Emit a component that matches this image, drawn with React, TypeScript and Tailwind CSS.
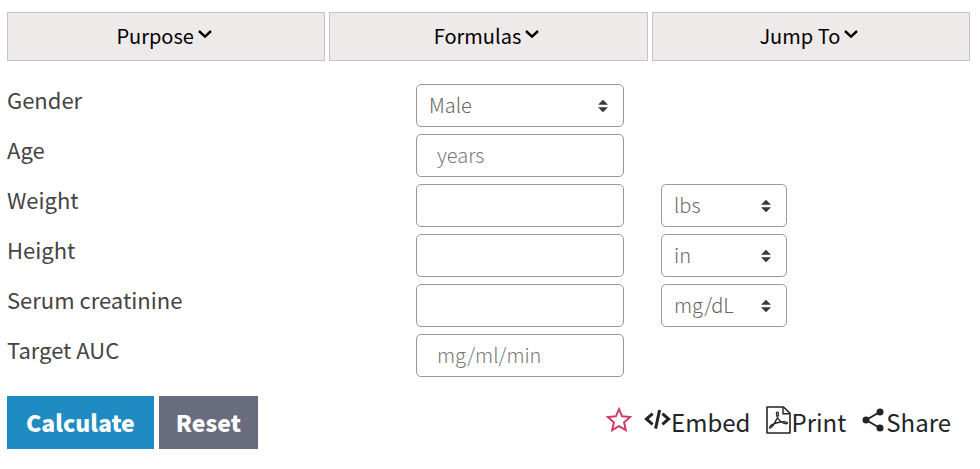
import { useState } from 'react'

type Field = {
  id: string
  label: string
  placeholder?: string
  options?: string[]
  units?: string[]
}

const TABS = ['Purpose', 'Formulas', 'Jump To']

const FIELDS: Field[] = [
  { id: 'gender', label: 'Gender', options: ['Male', 'Female'] },
  { id: 'age', label: 'Age', placeholder: 'years' },
  { id: 'weight', label: 'Weight', units: ['lbs', 'kg'] },
  { id: 'height', label: 'Height', units: ['in', 'cm'] },
  { id: 'creatinine', label: 'Serum creatinine', units: ['mg/dL', 'µmol/L'] },
  { id: 'auc', label: 'Target AUC', placeholder: 'mg/ml/min' },
]

function ChevronIcon() {
  return (
    <svg viewBox="0 0 14 8" className="mb-1 h-2 w-3.5" fill="none" stroke="currentColor" strokeWidth="2.4" aria-hidden="true">
      <path d="M1 1l6 5.6L13 1" />
    </svg>
  )
}

function StarIcon() {
  return (
    <svg viewBox="0 0 26 25" className="mb-1 h-[25px] w-[26px]" fill="none" stroke="#cf3a68" strokeWidth="2" aria-hidden="true">
      <path d="M13 2.2l3.1 7.1 8 .8-6 5.2 1.7 7.8L13 19.2l-6.8 3.9 1.7-7.8-6-5.2 8-.8z" />
    </svg>
  )
}

function CodeIcon() {
  return (
    <svg viewBox="0 0 27 21" className="mb-1 h-[21px] w-[27px]" fill="none" stroke="currentColor" strokeWidth="3" aria-hidden="true">
      <path d="M8.6 4.6L2.4 10l6.2 5.4M18.4 4.6l6.2 5.4-6.2 5.4M15.6 1l-4 18.6" />
    </svg>
  )
}

function PdfIcon() {
  return (
    <svg viewBox="0 0 25 28" className="mb-1 h-7 w-[25px]" fill="none" stroke="currentColor" aria-hidden="true">
      <path strokeWidth="1.6" strokeLinejoin="round" d="M1 1h16.5l6.5 6.3V27H1z" />
      <path strokeWidth="1.4" d="M17 1v6.8h7" />
      <path
        strokeWidth="1.3"
        d="M11.4 6.2c-1.5 0-1 2.3-.3 4.3.8 2.4 2.2 4.3 4.6 5.7 2.2 1.3 5.5 2.2 5.8.9.3-1.5-3.6-1.5-6.8-1.1-3.2.5-5.9 1.2-8.1 2.4-2.3 1.3-3.6 2.9-2.9 3.5.9.7 2.9-1.2 4.7-4.5 1.6-2.9 3.2-5.9 3.9-8.4.4-1.6 0-2.8-.9-2.8z"
      />
    </svg>
  )
}

function ShareIcon() {
  return (
    <svg viewBox="0 0 22 24" className="mb-1 h-6 w-[22px]" fill="currentColor" aria-hidden="true">
      <path d="M18 4L4 12l14 8" fill="none" stroke="currentColor" strokeWidth="2" />
      <circle cx="18" cy="4" r="3.5" />
      <circle cx="4" cy="12" r="3.5" />
      <circle cx="18" cy="20" r="3.5" />
    </svg>
  )
}

function Select({ id, label, options }: { id?: string; label?: string; options: string[] }) {
  return (
    <div className="relative">
      <select
        id={id}
        aria-label={label}
        className="h-[43px] w-full appearance-none rounded-[5px] border border-[#999] bg-white pb-0.5 pl-3 pr-8 text-xl font-light text-[#666]"
      >
        {options.map((o) => (
          <option key={o}>{o}</option>
        ))}
      </select>
      <svg
        viewBox="0 0 4 5"
        className="pointer-events-none absolute right-4 top-1/2 h-[13px] w-2.5 -translate-y-1/2"
        fill="#343a40"
        aria-hidden="true"
      >
        <path d="M2 0L0 2h4zm0 5L0 3h4z" />
      </svg>
    </div>
  )
}

export default function App() {
  const [values, setValues] = useState<Record<string, string>>({})
  const [starred, setStarred] = useState(false)

  return (
    <main className="bg-white pb-5 pl-[7px] pr-2.5 pt-3 font-['Noto_Sans_CJK_SC',sans-serif]">
      <nav className="grid grid-cols-3 gap-1">
        {TABS.map((tab) => (
          <button
            key={tab}
            type="button"
            className="flex h-[49px] items-center justify-center gap-1 border border-[#c4c4c8] bg-[#edeae9] pb-0.5 pr-1 text-xl text-black"
          >
            {tab}
            <ChevronIcon />
          </button>
        ))}
      </nav>

      <form onSubmit={(e) => e.preventDefault()} onReset={() => setValues({})}>
        <div className="mt-[23px] flex flex-col gap-[7px]">
          {FIELDS.map((f) => (
            <div key={f.id} className="grid grid-cols-[372fr_208fr_126fr_146fr] gap-x-[37px]">
              <label htmlFor={f.id} className="whitespace-nowrap text-[22px] leading-[30px] text-[#444]">
                {f.label}
              </label>
              {f.options ? (
                <Select id={f.id} options={f.options} />
              ) : (
                <input
                  id={f.id}
                  type="text"
                  placeholder={f.placeholder}
                  value={values[f.id] ?? ''}
                  onChange={(e) => setValues({ ...values, [f.id]: e.target.value })}
                  className="h-[43px] w-full rounded-[5px] border border-[#999] px-5 pb-0.5 text-xl font-light text-[#444] placeholder:text-[#777]"
                />
              )}
              {f.units && <Select label={`${f.label} unit`} options={f.units} />}
            </div>
          ))}
        </div>

        <div className="mt-[19px] flex items-center justify-between">
          <div className="flex gap-[5px] text-[23px] font-black text-white">
            <button type="submit" className="h-[53px] bg-[#1e8bc3] px-[19px]">
              Calculate
            </button>
            <button type="reset" className="h-[53px] bg-[#696b7e] px-[17px]">
              Reset
            </button>
          </div>
          <div className="flex items-center gap-3 pb-0.5 pr-[19px] text-2xl text-[#212529]">
            <button type="button" aria-label="Favorite" aria-pressed={starred} onClick={() => setStarred(!starred)}>
              <StarIcon />
            </button>
            <div className="flex items-center gap-4">
              <a href="#embed" className="flex items-center">
                <CodeIcon />
                Embed
              </a>
              <a href="#print" className="flex items-center">
                <PdfIcon />
                Print
              </a>
              <a href="#share" className="flex items-center gap-0.5">
                <ShareIcon />
                Share
              </a>
            </div>
          </div>
        </div>
      </form>
    </main>
  )
}
